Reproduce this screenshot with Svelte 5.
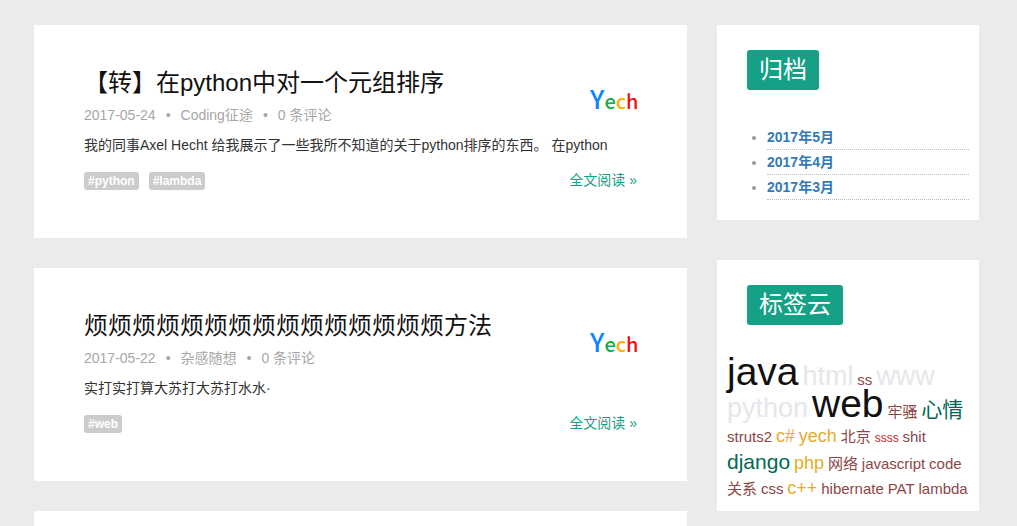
<script>
  const posts = [
    {
      title: '【转】在python中对一个元组排序',
      date: '2017-05-24',
      category: 'Coding征途',
      excerpt: '我的同事Axel Hecht 给我展示了一些我所不知道的关于python排序的东西。 在python',
      tags: ['python', 'lambda']
    },
    {
      title: '烦烦烦烦烦烦烦烦烦烦烦烦烦烦烦方法',
      date: '2017-05-22',
      category: '杂感随想',
      excerpt: '实打实打算大苏打大苏打水水·',
      tags: ['web']
    }
  ];

  const archives = ['2017年5月', '2017年4月', '2017年3月'];

  const cloud = [
    ['java', 'huge'],
    ['html', 'pale'],
    ['ss', 'base'],
    ['www', 'pale'],
    ['python', 'pale'],
    ['web', 'huge'],
    ['牢骚', 'base'],
    ['心情', 'green'],
    ['struts2', 'base'],
    ['c#', 'gold'],
    ['yech', 'gold'],
    ['北京', 'base'],
    ['ssss', 'tiny'],
    ['shit', 'base'],
    ['django', 'green'],
    ['php', 'gold'],
    ['网络', 'base'],
    ['javascript', 'base'],
    ['code', 'base'],
    ['关系', 'base'],
    ['css', 'base'],
    ['c++', 'gold'],
    ['hibernate', 'base'],
    ['PAT', 'base'],
    ['lambda', 'base']
  ];
</script>

<div class="page">
  <main>
    {#each posts as post}
      <article class="card post">
        <header>
          <div>
            <h2><a href="#post">{post.title}</a></h2>
            <p class="meta">
              <span>{post.date}</span><i>•</i><a href="#category">{post.category}</a><i>•</i><span>0 条评论</span>
            </p>
          </div>
          <svg class="logo" width="50" height="50" viewBox="0 0 50 50" role="img" aria-label="Yech">
            <text x="3" y="39"><tspan class="cap" fill="#0a84ff">Y</tspan><tspan fill="#0cab4c">e</tspan><tspan fill="#ffb000">c</tspan><tspan fill="#f80d0d">h</tspan></text>
          </svg>
        </header>
        <p class="excerpt">{post.excerpt}</p>
        <footer>
          <div class="tags">
            {#each post.tags as tag}
              <a href="#tag">#{tag}</a>
            {/each}
          </div>
          <a class="more" href="#post">全文阅读 »</a>
        </footer>
      </article>
    {/each}
    <div class="card rest"></div>
  </main>

  <aside>
    <section class="card archive">
      <h3>归档</h3>
      <ul>
        {#each archives as month}
          <li><a href="#archive">{month}</a></li>
        {/each}
      </ul>
    </section>
    <section class="card cloud">
      <h3>标签云</h3>
      <p>
        {#each cloud as [word, kind]}
          <a class={kind} href="#tag">{word}</a>{' '}
        {/each}
      </p>
    </section>
  </aside>
</div>

<style>
  :global(body) {
    background: #ebebeb;
  }
  .page {
    box-sizing: border-box;
    min-height: 100vh;
    display: grid;
    grid-template-columns: minmax(0, 653fr) minmax(0, 262fr);
    gap: 30px;
    padding: 25px 38px 0 34px;
    font: 14px/24px "Liberation Sans", "Noto Sans CJK SC", sans-serif;
    color: #333;
  }
  main {
    display: flex;
    flex-direction: column;
    gap: 30px;
  }
  aside {
    display: flex;
    flex-direction: column;
    gap: 40px;
  }
  .card {
    background: #fff;
  }
  .rest {
    flex: 1;
  }
  h2, h3, p, ul {
    margin: 0;
    padding: 0;
    font-weight: 400;
  }
  a {
    color: inherit;
    text-decoration: none;
  }
  .post {
    padding: 40px 50px 48px;
  }
  header {
    display: flex;
    justify-content: space-between;
  }
  h2 {
    font-size: 24px;
    line-height: 36px;
    color: #111;
  }
  .meta {
    display: flex;
    gap: 10px;
    line-height: 28px;
    color: #a6a6a6;
  }
  .meta i {
    font-style: normal;
  }
  .logo {
    display: block;
    margin-top: 5px;
    flex: none;
  }
  .logo text {
    font-family: "Noto Sans CJK SC", sans-serif;
    font-size: 20px;
    font-weight: 500;
  }
  .logo .cap {
    font-size: 26px;
  }
  .excerpt {
    line-height: 32px;
  }
  footer {
    display: flex;
    justify-content: space-between;
    align-items: flex-start;
    height: 18px;
    margin-top: 11px;
  }
  .tags {
    display: flex;
    gap: 10px;
  }
  .tags a {
    padding: 0 4px;
    border-radius: 3px;
    background: #ccc;
    color: #fff;
    font-size: 12px;
    font-weight: 700;
    line-height: 18px;
  }
  .more {
    color: #16a085;
    line-height: 16px;
  }
  h3 {
    width: fit-content;
    margin: 0 0 35px 20px;
    padding: 0 12px;
    border-radius: 3px;
    background: #16a085;
    color: #fff;
    font-size: 24px;
    line-height: 40px;
  }
  .archive {
    padding: 25px 10px 20px;
  }
  ul {
    padding-left: 40px;
    color: #999;
  }
  li {
    border-bottom: 1px dotted #bbb;
  }
  li a {
    color: #337ab7;
    font-weight: 700;
  }
  .cloud {
    padding: 25px 10px 10px;
  }
  .base {
    font-size: 15px;
    color: #8c4646;
  }
  .tiny {
    font-size: 12px;
    color: #bf1e2e;
  }
  .gold {
    font-size: 18px;
    color: #e6ac27;
  }
  .green {
    font-size: 21px;
    color: #006a55;
  }
  .pale {
    font-size: 27px;
    color: #e6e6ea;
  }
  .huge {
    font-size: 39px;
    color: #111;
  }
</style>
